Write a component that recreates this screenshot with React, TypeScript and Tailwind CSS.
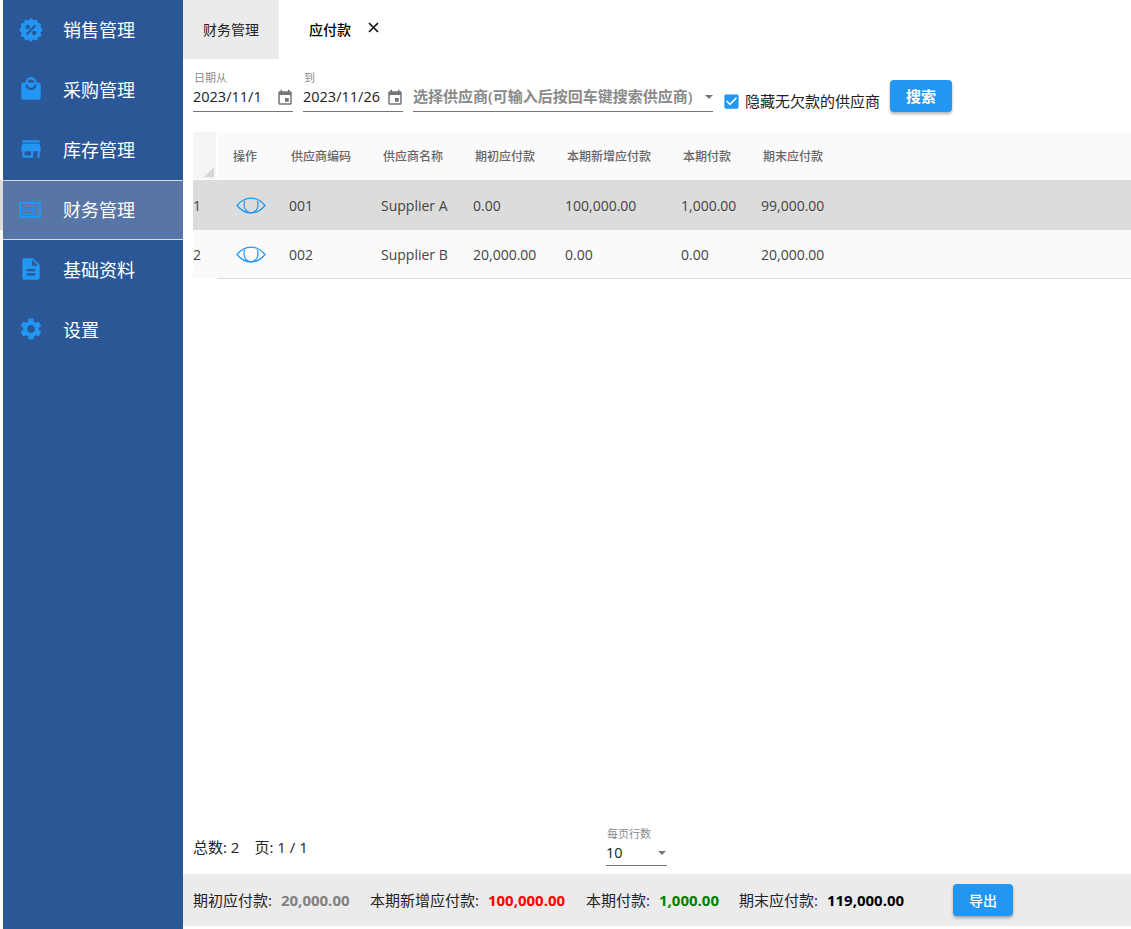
import type { ReactNode } from "react";

const FONT = "[font-family:'Open_Sans','Noto_Sans_CJK_SC',sans-serif]";

/* ── Icons ─────────────────────────────────────────────────────────────── */
function MuiIcon({ d, className }: { d: string; className: string }) {
  return (
    <svg viewBox="0 0 24 24" className={className} fill="currentColor">
      <path d={d} />
    </svg>
  );
}

function DiscountIcon() {
  return (
    <svg viewBox="0 0 24 24" className="w-[26px] h-[26px] mt-[2px] text-[#2196f3]" fill="currentColor">
      <path
        fillRule="evenodd"
        d="M12 1l2.4 2.2 3.1-.9 1 3.1 3.1 1-.9 3.1L23 12l-2.3 2.5.9 3.1-3.1 1-1 3.1-3.1-.9L12 23l-2.4-2.2-3.1.9-1-3.1-3.1-1 .9-3.1L1 12l2.3-2.5-.9-3.1 3.1-1 1-3.1 3.1.9L12 1zm3.3 6.2l-8 8 1.4 1.4 8-8-1.4-1.4zM9 7.2a2 2 0 100 4 2 2 0 000-4zm6 5.6a2 2 0 100 4 2 2 0 000-4z"
      />
    </svg>
  );
}

function MoneyIcon() {
  return (
    <svg viewBox="0 0 22 16" className="w-[22px] h-[16px] ml-[1px] mt-[2px] text-[#2196f3]" fill="none" stroke="currentColor">
      <rect x="1" y="1" width="20" height="14" strokeWidth="2" />
      <rect x="3.5" y="3.5" width="15" height="9" rx="2.5" strokeWidth="1" />
      <path d="M6.5 6v4" strokeWidth="1" />
      <ellipse cx="10" cy="8" rx="1.4" ry="2" strokeWidth="1" />
      <ellipse cx="14.5" cy="8" rx="1.4" ry="2" strokeWidth="1" />
    </svg>
  );
}

function EyeIcon() {
  return (
    <svg viewBox="0 0 30 17" className="w-[30px] h-[17px] text-[#2196f3]" fill="none" stroke="currentColor" strokeWidth="1.2">
      <path d="M1 8.5C5 3.6 9.5 1.1 15 1.1S25 3.6 29 8.5c-4 4.9-8.5 7.4-14 7.4S5 13.4 1 8.5z" />
      <path d="M8.8 3.8C8.2 4.9 8 6.4 8 7.8c0 4.4 3.1 8 7 8s7-3.6 7-8c0-1.4-.2-2.9-.8-4" />
    </svg>
  );
}

const CALENDAR =
  "M17 12h-5v5h5v-5zM16 1v2H8V1H6v2H5c-1.11 0-1.99.9-1.99 2L3 19c0 1.1.89 2 2 2h14c1.1 0 2-.9 2-2V5c0-1.1-.9-2-2-2h-1V1h-2zm3 18H5V8h14v11z";
const CHECKBOX =
  "M19 3H5c-1.11 0-2 .9-2 2v14c0 1.1.89 2 2 2h14c1.11 0 2-.9 2-2V5c0-1.1-.89-2-2-2zm-9 14l-5-5 1.41-1.41L10 14.17l7.59-7.59L19 8l-9 9z";

const NAV: { label: string; icon: ReactNode; active?: boolean }[] = [
  { label: "销售管理", icon: <DiscountIcon /> },
  {
    label: "采购管理",
    icon: (
      <MuiIcon
        className="w-[26px] h-[26px] text-[#2196f3]"
        d="M19 6h-2c0-2.76-2.24-5-5-5S7 3.24 7 6H5c-1.1 0-2 .9-2 2v12c0 1.1.9 2 2 2h14c1.1 0 2-.9 2-2V8c0-1.1-.9-2-2-2zm-7-3c1.66 0 3 1.34 3 3H9c0-1.66 1.34-3 3-3zm0 10c-2.76 0-5-2.24-5-5h2c0 1.66 1.34 3 3 3s3-1.34 3-3h2c0 2.76-2.24 5-5 5z"
      />
    ),
  },
  {
    label: "库存管理",
    icon: (
      <MuiIcon
        className="w-[26px] h-[26px] text-[#2196f3]"
        d="M20 4H4v2h16V4zm1 10v-2l-1-5H4l-1 5v2h1v6h10v-6h4v6h2v-6h1zm-9 4H6v-4h6v4z"
      />
    ),
  },
  { label: "财务管理", icon: <MoneyIcon />, active: true },
  {
    label: "基础资料",
    icon: (
      <MuiIcon
        className="w-[26px] h-[26px] text-[#2196f3]"
        d="M14 2H6c-1.1 0-1.99.9-1.99 2L4 20c0 1.1.89 2 1.99 2H18c1.1 0 2-.9 2-2V8l-6-6zm2 16H8v-2h8v2zm0-4H8v-2h8v2zm-3-5V3.5L18.5 9H13z"
      />
    ),
  },
  {
    label: "设置",
    icon: (
      <MuiIcon
        className="w-[26px] h-[26px] text-[#2196f3]"
        d="M19.14 12.94c.04-.3.06-.61.06-.94 0-.32-.02-.64-.07-.94l2.03-1.58c.18-.14.23-.41.12-.61l-1.92-3.32c-.12-.22-.37-.29-.59-.22l-2.39.96c-.5-.38-1.03-.7-1.62-.94l-.36-2.54c-.04-.24-.24-.41-.48-.41h-3.84c-.24 0-.43.17-.47.41l-.36 2.54c-.59.24-1.13.57-1.62.94l-2.39-.96c-.22-.08-.47 0-.59.22L2.74 8.87c-.12.21-.08.47.12.61l2.03 1.58c-.05.3-.09.63-.09.94s.02.64.07.94l-2.03 1.58c-.18.14-.23.41-.12.61l1.92 3.32c.12.22.37.29.59.22l2.39-.96c.5.38 1.03.7 1.62.94l.36 2.54c.05.24.24.41.48.41h3.84c.24 0 .44-.17.47-.41l.36-2.54c.59-.24 1.13-.56 1.62-.94l2.39.96c.22.08.47 0 .59-.22l1.92-3.32c.12-.22.07-.47-.12-.61l-2.01-1.58zM12 15.6c-1.98 0-3.6-1.62-3.6-3.6s1.62-3.6 3.6-3.6 3.6 1.62 3.6 3.6-1.62 3.6-3.6 3.6z"
      />
    ),
  },
];

const COLS = "grid-cols-[64px_92px_92px_92px_116px_80px_1fr]";
const HEADERS = ["操作", "供应商编码", "供应商名称", "期初应付款", "本期新增应付款", "本期付款", "期末应付款"];
const ROWS = [
  ["001", "Supplier A", "0.00", "100,000.00", "1,000.00", "99,000.00"],
  ["002", "Supplier B", "20,000.00", "0.00", "0.00", "20,000.00"],
];

function DateField({ label, value }: { label: string; value: string }) {
  return (
    <div className="w-[100px] mr-[10px]">
      <div className="h-[14px] pl-[1px] text-[11px] leading-[12px] text-[#8a8a8a]">{label}</div>
      <div className="h-[26px] flex items-center justify-between border-b border-[#757575] text-[14.5px] text-[#222]">
        <span className="mb-[4px]">{value}</span>
        <MuiIcon d={CALENDAR} className="w-[18px] h-[18px] text-[#757575] -mr-[1px] mb-[1px]" />
      </div>
    </div>
  );
}

function Stat({ label, value, color, className }: { label: string; value: string; color: string; className: string }) {
  return (
    <div className={`flex items-center shrink-0 ${className}`}>
      <span className="text-[#222]">{label}</span>
      <span className={`ml-[9px] font-bold text-[15px] ${color}`}>{value}</span>
    </div>
  );
}

export default function App() {
  return (
    <div className={`w-[1131px] h-[929px] flex overflow-hidden bg-white ${FONT}`}>
      {/* bande à gauche du menu */}
      <div className="w-[3px] shrink-0 flex flex-col">
        <div className="h-[180px] shrink-0" />
        <div className="h-[50px] shrink-0 bg-[#dcdcdc]" />
        <div className="h-[48px] shrink-0 bg-[#fafafa]" />
      </div>

      {/* Sidebar */}
      <aside className="w-[180px] shrink-0 bg-[#2b5797] text-white">
        {NAV.map((item) => (
          <div
            key={item.label}
            className={`h-[60px] pb-[2px] flex items-center text-[18px] ${
              item.active ? "bg-[#5876a5] border-y border-[#d8dde6]" : ""
            }`}
          >
            <div className="w-[60px] pl-[15px] shrink-0 flex items-center">{item.icon}</div>
            <span className="font-['Noto_Sans_CJK_SC']">{item.label}</span>
          </div>
        ))}
      </aside>

      <main className="flex-1 min-w-0 flex flex-col">
        {/* Tabs */}
        <div className="h-[59px] shrink-0 flex">
          <div className="w-[96px] bg-[#ebebeb] flex items-center justify-center text-[14px] text-[#222]">财务管理</div>
          <div className="pl-[30px] flex items-center text-[14px] font-medium text-black">
            <span>应付款</span>
            <svg viewBox="0 0 11 11" className="ml-[17px] mb-[5px] w-[11px] h-[11px]" fill="none" stroke="#111" strokeWidth="1.7">
              <path d="M1 1l9 9M10 1l-9 9" />
            </svg>
          </div>
        </div>

        {/* Barre de recherche */}
        <div className="h-[73px] shrink-0 pl-[10px] pt-[13px] flex items-start">
          <DateField label="日期从" value="2023/11/1" />
          <DateField label="到" value="2023/11/26" />
          <div className="w-[300px] mt-[14px] h-[26px] flex items-center justify-between border-b border-[#757575] text-[15px] font-semibold text-[#8a8a8a]">
            <span className="mb-[4px] whitespace-nowrap">选择供应商(可输入后按回车键搜索供应商)</span>
            <span className="mb-[4px] border-x-[4px] border-x-transparent border-t-[4px] border-t-[#757575]" />
          </div>
          <div className="ml-[9px] mt-[18px] flex items-center text-[15px] text-[#222]">
            <MuiIcon d={CHECKBOX} className="w-[19px] h-[19px] text-[#2196f3]" />
            <span className="ml-[4px]">隐藏无欠款的供应商</span>
          </div>
          <button className="ml-[10px] mt-[8px] w-[62px] h-[32px] rounded bg-[#2196f3] text-white text-[15px] font-bold shadow-[0_2px_3px_rgba(0,0,0,0.3)]">
            搜索
          </button>
        </div>

        {/* Tableau */}
        <div className="ml-[10px] flex">
          <div className="w-[24px] shrink-0">
            <div className="h-[48px] bg-[#f5f5f5] border-r border-b border-white relative">
              <span className="absolute right-[2px] bottom-[2px] w-0 h-0 border-l-[10px] border-l-transparent border-b-[10px] border-b-[#d6d6d6]" />
            </div>
            <div className="h-[50px] bg-[#dcdcdc] flex items-center text-[14px] text-[#444]">1</div>
            <div className="h-[48px] bg-[#fafafa] flex items-center text-[14px] text-[#444]">2</div>
          </div>
          <div className="flex-1 min-w-0">
            <div className={`h-[48px] pt-[2px] grid ${COLS} items-center bg-[#fafafa] text-[12px] font-medium text-[#666]`}>
              {HEADERS.map((h, i) => (
                <div key={h} className={i === 0 ? "pl-[16px]" : "pl-[10px]"}>
                  {h}
                </div>
              ))}
            </div>
            {ROWS.map((row, i) => (
              <div
                key={row[0]}
                className={`grid ${COLS} items-center text-[14px] text-[#444] ${
                  i === 0 ? "h-[50px] bg-[#dcdcdc]" : "h-[49px] bg-[#fafafa] border-b border-[#dedede]"
                }`}
              >
                <div className="pl-[19px] flex">
                  <EyeIcon />
                </div>
                {row.map((c, j) => (
                  <div key={j} className="pl-[8px]">
                    {c}
                  </div>
                ))}
              </div>
            ))}
          </div>
        </div>

        <div className="flex-1" />

        {/* Pagination */}
        <div className="h-[47px] shrink-0 pl-[10px] flex items-start">
          <div className="w-[413px] mt-[9px] text-[15px] text-[#222]">
            <span>总数: 2</span>
            <span className="ml-[15px]">页: 1 / 1</span>
          </div>
          <div className="w-[61px]">
            <div className="h-[14px] pl-[1px] text-[11px] leading-[14px] text-[#8a8a8a]">每页行数</div>
            <div className="h-[25px] flex items-center justify-between border-b border-[#757575] text-[14.5px] text-[#222]">
              <span>10</span>
              <span className="mr-[1px] border-x-[4px] border-x-transparent border-t-[4px] border-t-[#757575]" />
            </div>
          </div>
        </div>

        {/* Totaux */}
        <div className="h-[52px] shrink-0 pl-[10px] mb-[3px] bg-[#ebebeb] flex items-center text-[15px]">
          <Stat label="期初应付款:" value="20,000.00" color="text-[#808080]" className="w-[177px]" />
          <Stat label="本期新增应付款:" value="100,000.00" color="text-[#ff0000]" className="w-[216px]" />
          <Stat label="本期付款:" value="1,000.00" color="text-[#008000]" className="w-[153px]" />
          <Stat label="期末应付款:" value="119,000.00" color="text-black" className="w-[214px]" />
          <button className="w-[60px] h-[32px] rounded bg-[#2196f3] text-white text-[14px] font-medium shadow-[0_2px_3px_rgba(0,0,0,0.3)]">
            导出
          </button>
        </div>
      </main>
    </div>
  );
}
